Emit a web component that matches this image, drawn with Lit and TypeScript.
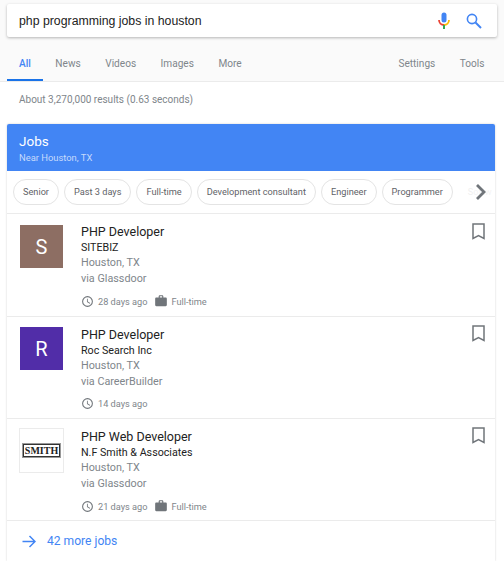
import { LitElement, html, css, svg } from "lit";
import { customElement } from "lit/decorators.js";

interface Job {
  title: string;
  company: string;
  via: string;
  age: string;
  fullTime: boolean;
  logo: string;
  color?: string;
}

const jobs: Job[] = [
  { title: "PHP Developer", company: "SITEBIZ", via: "via Glassdoor", age: "28 days ago", fullTime: true, logo: "S", color: "#8d6e63" },
  { title: "PHP Developer", company: "Roc Search Inc", via: "via CareerBuilder", age: "14 days ago", fullTime: false, logo: "R", color: "#512da8" },
  { title: "PHP Web Developer", company: "N.F Smith & Associates", via: "via Glassdoor", age: "21 days ago", fullTime: true, logo: "SMITH" },
];

const chips = ["Senior", "Past 3 days", "Full-time", "Development consultant", "Engineer", "Programmer"];

const clock = svg`<path fill="#70757a" d="M12 2a10 10 0 1 0 0 20 10 10 0 0 0 0-20zm0 18a8 8 0 1 1 0-16 8 8 0 0 1 0 16zm.5-13H11v6l5.2 3.2.8-1.3-4.5-2.7V7z"/>`;
const briefcase = svg`<path fill="#70757a" d="M20 6h-4V4c0-1.1-.9-2-2-2h-4c-1.1 0-2 .9-2 2v2H4c-1.1 0-2 .9-2 2v11c0 1.1.9 2 2 2h16c1.100 0 2-.9 2-2V8c0-1.100-.9-2-2-2zm-6 0h-4V4h4v2z"/>`;

@customElement("app-root")
export class AppRoot extends LitElement {
  render() {
    return html`
      <div class="top">
        <div class="search">
          <span class="query">php programming jobs in houston</span>
          <svg class="mic" width="14" height="18" viewBox="0 0 14 18">
            <rect x="4.500" y="0.500" width="5" height="10" rx="2.500" fill="#4285f4"/>
            <path d="M2 8a5 5 0 0 0 5 5" fill="none" stroke="#ea4335" stroke-width="1.800"/>
            <path d="M7 13a5 5 0 0 0 5-5" fill="none" stroke="#fbbc05" stroke-width="1.800"/>
            <rect x="6" y="13" width="2" height="4" fill="#34a853"/>
          </svg>
          <svg class="mag" width="16" height="16" viewBox="0 0 16 16">
            <circle cx="6" cy="6" r="4.600" fill="none" stroke="#4285f4" stroke-width="1.600"/>
            <path d="M9.500 9.500 15 15" stroke="#4285f4" stroke-width="2"/>
          </svg>
        </div>
        <nav class="tabs">
          <span class="tab active">All</span>
          <span class="tab">News</span>
          <span class="tab">Videos</span>
          <span class="tab">Images</span>
          <span class="tab">More</span>
          <span class="spacer"></span>
          <span class="tab">Settings</span>
          <span class="tab">Tools</span>
        </nav>
      </div>
      <div class="stats">About 3,270,000 results (0.63 seconds)</div>
      <section class="card">
        <header class="head">
          <div class="head-title">Jobs</div>
          <div class="head-sub">Near Houston, TX</div>
        </header>
        <div class="chips">
          ${chips.map((c) => html`<span class="chip">${c}</span>`)}
          <span class="chip ghost">Softw</span>
          <div class="fade">
            <svg width="12" height="18" viewBox="0 0 12 18"><path d="M2 2l7 7-7 7" fill="none" stroke="#70757a" stroke-width="2.800"/></svg>
          </div>
        </div>
        ${jobs.map(
          (j) => html`
            <article class="job">
              ${j.color
                ? html`<div class="logo" style="background:${j.color}">${j.logo}</div>`
                : html`<div class="logo smith"><span class="smith-mark">${j.logo}</span></div>`}
              <div class="info">
                <div class="title">${j.title}</div>
                <div class="company">${j.company}</div>
                <div class="place">Houston, TX</div>
                <div class="place">${j.via}</div>
                <div class="meta">
                  <svg class="clock" width="13" height="13" viewBox="0 0 24 24">${clock}</svg>
                  <span>${j.age}</span>
                  ${j.fullTime
                    ? html`<svg class="case" width="14" height="14" viewBox="0 0 24 24">${briefcase}</svg><span>Full-time</span>`
                    : ""}
                </div>
              </div>
              <svg class="mark" width="13" height="17" viewBox="0 0 13 17">
                <path d="M1 1h11v14.500L6.500 12.500 1 15.500z" fill="none" stroke="#70757a" stroke-width="1.500"/>
              </svg>
            </article>
          `
        )}
        <div class="more">
          <svg width="14" height="13" viewBox="0 0 14 13"><path d="M0.500 6.500h12.500M7.500 1l5.500 5.500L7.500 12" fill="none" stroke="#4285f4" stroke-width="1.500"/></svg>
          <span>42 more jobs</span>
        </div>
      </section>
    `;
  }

  static styles = css`
    :host {
      display: block;
      width: 504px;
      height: 561px;
      overflow: hidden;
      background: #fff;
      font-family: Roboto, "Liberation Sans", sans-serif;
      color: #70757a;
    }

    .top {
      background: #fafafa;
      padding: 4px 7px 0;
      height: 82px;
      box-sizing: border-box;
      border-bottom: 1px solid #ebebeb;
    }

    .search {
      display: flex;
      align-items: center;
      height: 33px;
      padding: 0 15px 0 12px;
      background: #fff;
      border-radius: 2px;
      box-shadow: 0 1px 3px rgba(0, 0, 0, 0.28);
    }

    .query {
      flex: 1;
      font-family: "Liberation Sans", Arial, sans-serif;
      font-size: 12.300px;
      color: #222;
    }

    .mic {
      margin-right: 15px;
    }

    .tabs {
      display: flex;
      height: 31px;
      margin-top: 13px;
      font-size: 10.100px;
    }

    .tab {
      padding: 8px 12px 0;
      margin-right: 0.500px;
      color: #80868b;
    }

    .spacer {
      flex: 1;
    }

    .tab.active {
      color: #4285f4;
      font-weight: 500;
      border-bottom: 2px solid #1a73e8;
    }

    .stats {
      height: 42px;
      padding: 11px 0 0 19px;
      box-sizing: border-box;
      font-size: 10px;
      line-height: 14px;
      color: #80868b;
    }

    .card {
      margin: 0 9px 0 7px;
      height: 437px;
      box-shadow: 0 0 2px rgba(0, 0, 0, 0.22);
      background: #fff;
      border-radius: 2px 2px 0 0;
    }

    .head {
      height: 47px;
      box-sizing: border-box;
      padding: 9px 12px 0;
      background: #4285f4;
      border-radius: 2px 2px 0 0;
    }

    .head-title {
      font-size: 13.500px;
      line-height: 16px;
      color: #fff;
    }

    .head-sub {
      margin-top: 2px;
      font-size: 9.400px;
      line-height: 14px;
      color: #c6dafc;
    }

    .chips {
      position: relative;
      display: flex;
      align-items: center;
      gap: 5px;
      height: 42px;
      padding-left: 6px;
      overflow: hidden;
      border-bottom: 1px solid #ebebeb;
    }

    .chip {
      flex: none;
      height: 24px;
      line-height: 24px;
      padding: 0 9px;
      border: 1px solid #e4e4e4;
      border-radius: 13px;
      font-size: 9.200px;
      color: #5f6368;
    }

    .chip.ghost {
      opacity: 0.25;
      border-color: transparent;
    }

    .fade {
      position: absolute;
      right: 0;
      top: 0;
      bottom: 0;
      width: 38px;
      display: flex;
      align-items: center;
      justify-content: flex-end;
      padding-right: 8px;
      box-sizing: border-box;
      background: linear-gradient(to right, rgba(255, 255, 255, 0.4), rgba(255, 255, 255, 0.7) 50%);
    }

    .job {
      display: flex;
      height: 102px;
      box-sizing: border-box;
      padding: 10px 10px 0 13px;
      border-bottom: 1px solid #ebebeb;
    }

    .job:first-of-type {
      height: 103px;
      padding-top: 11px;
    }

    .logo {
      flex: none;
      width: 43px;
      height: 43px;
      display: flex;
      align-items: center;
      justify-content: center;
      color: #fff;
      font-size: 20px;
    }

    .logo.smith {
      width: 45px;
      height: 45px;
      margin: -1px;
      box-sizing: border-box;
      border: 1px solid #ebebeb;
    }

    .smith-mark {
      padding: 1px 1px 0;
      border: 1px solid #333;
      outline: 1px solid #999;
      font-family: "Liberation Serif", serif;
      font-weight: 700;
      font-size: 10px;
      line-height: 10px;
      color: #222;
    }

    .info {
      flex: 1;
      margin-left: 18px;
      margin-top: -1px;
    }

    .job:first-of-type .info {
      margin-top: -2px;
    }

    .title {
      font-size: 12.500px;
      line-height: 17px;
      color: #222;
    }

    .company {
      font-size: 10.700px;
      line-height: 15px;
      color: #222;
    }

    .place {
      font-size: 10.800px;
      line-height: 15.500px;
      color: #80868b;
    }

    .meta {
      display: flex;
      align-items: center;
      gap: 3px;
      margin-top: 8px;
      font-size: 9.200px;
      color: #80868b;
    }

    .clock {
      margin-right: 1px;
    }

    .case {
      margin-left: 4px;
    }

    .mark {
      margin-top: -2px;
    }

    .more {
      display: flex;
      align-items: center;
      gap: 11px;
      height: 40px;
      padding-left: 15px;
      font-size: 12.100px;
      color: #4285f4;
    }
  `;
}
